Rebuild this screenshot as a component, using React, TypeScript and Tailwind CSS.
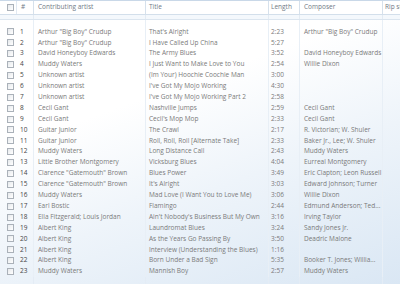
import React from "react";

type Track = [string, string, string, string];

const tracks: Track[] = [
  ['Arthur "Big Boy" Crudup', "That's Alright", "2:23", 'Arthur "Big Boy" Crudup'],
  ['Arthur "Big Boy" Crudup', "I Have Called Up China", "5:27", ""],
  ["David Honeyboy Edwards", "The Army Blues", "3:52", "David Honeyboy Edwards"],
  ["Muddy Waters", "I Just Want to Make Love to You", "2:54", "Willie Dixon"],
  ["Unknown artist", "(Im Your) Hoochie Coochie Man", "3:00", ""],
  ["Unknown artist", "I've Got My Mojo Working", "4:30", ""],
  ["Unknown artist", "I've Got My Mojo Working Part 2", "2:58", ""],
  ["Cecil Gant", "Nashville Jumps", "2:59", "Cecil Gant"],
  ["Cecil Gant", "Cecil's Mop Mop", "2:33", "Cecil Gant"],
  ["Guitar Junior", "The Crawl", "2:17", "R. Victorian; W. Shuler"],
  ["Guitar Junior", "Roll, Roll, Roll [Alternate Take]", "2:33", "Baker Jr., Lee; W. Shuler"],
  ["Muddy Waters", "Long Distance Call", "2:43", "Muddy Waters"],
  ["Little Brother Montgomery", "Vicksburg Blues", "4:04", "Eurreal Montgomery"],
  ['Clarence "Gatemouth" Brown', "Blues Power", "3:49", "Eric Clapton; Leon Russell"],
  ['Clarence "Gatemouth" Brown', "It's Alright", "3:03", "Edward Johnson; Turner"],
  ["Muddy Waters", "Mad Love (I Want You to Love Me)", "3:06", "Willie Dixon"],
  ["Earl Bostic", "Flamingo", "2:44", "Edmund Anderson; Ted..."],
  ["Ella Fitzgerald;  Louis Jordan", "Ain't Nobody's Business But My Own", "3:16", "Irving Taylor"],
  ["Albert King", "Laundromat Blues", "3:24", "Sandy Jones Jr."],
  ["Albert King", "As the Years Go Passing By", "3:50", "Deadric Malone"],
  ["Albert King", "Interview (Understanding the Blues)", "1:16", ""],
  ["Albert King", "Born Under a Bad Sign", "5:35", "Booker T. Jones; Willia..."],
  ["Muddy Waters", "Mannish Boy", "2:57", "Muddy Waters"],
];

const cols = "grid grid-cols-[16px_17px_112px_123px_31px_83px_18px]";

function Box() {
  return (
    <span className="block h-[7px] w-[7px] border border-[#aab1b9] bg-[linear-gradient(135deg,#e6e9ec,#ffffff)]" />
  );
}

export default function App() {
  return (
    <div
      className="relative flex h-[284px] w-[400px] flex-col overflow-hidden bg-[linear-gradient(160deg,#ffffff_35%,#eef4fa_62%,#dae7f4_100%)] text-[6.5px] leading-none text-[#7a7a7a]"
      style={{ fontFamily: '"Open Sans", "Noto Sans", sans-serif' }}
    >
      {/* header */}
      <div className={`${cols} h-[15px] border-t border-b border-t-[#c9d8e8] border-b-[#d3dfeb] bg-white/70 text-[#707a86]`}>
        <div className="flex items-center justify-end pr-[2px]">
          <Box />
        </div>
        <div className="flex items-center border-l border-[#e1e9f2] pl-[4px]">#</div>
        <div className="flex items-center border-l border-[#d6e1ec] pl-[4px]">Contributing artist</div>
        <div className="flex items-center border-l border-[#d6e1ec] pl-[3px]">Title</div>
        <div className="flex items-center border-l border-[#d6e1ec] pl-[2px]">Length</div>
        <div className="flex items-center border-l border-[#d6e1ec] pl-[4px]">Composer</div>
        <div className="flex items-center overflow-hidden border-l border-[#d6e1ec] pl-[2px] whitespace-nowrap">Rip status</div>
      </div>

      {/* band under header */}
      <div className={`${cols} h-[5px] border-b border-[#dbe5ef] bg-[#f4f8fc]`}>
        <div />
        <div />
        <div className="border-l border-[#e3ebf3]" />
        <div className="border-l border-[#e3ebf3]" />
        <div className="border-l border-[#e3ebf3]" />
        <div className="border-l border-[#e3ebf3]" />
        <div className="border-l border-[#e3ebf3]" />
      </div>

      <div className={`${cols} h-[6.5px]`}>
        <div />
        <div />
        <div className="border-l border-[#e8eff6]" />
        <div className="border-l border-[#e8eff6]" />
        <div className="border-l border-[#e8eff6]" />
        <div className="border-l border-[#e8eff6]" />
        <div className="border-l border-[#e8eff6]" />
      </div>

      {tracks.map(([artist, title, length, composer], i) => (
        <div key={i} className={`${cols} h-[10.9px] whitespace-nowrap`}>
          <div className="flex items-center justify-end pr-[2px]">
            <Box />
          </div>
          <div className="flex items-center pl-[4px] text-[#444444]">{i + 1}</div>
          <div className="flex items-center overflow-hidden border-l border-[#e8eff6] pl-[4px]">{artist}</div>
          <div className="flex items-center overflow-hidden border-l border-[#e8eff6] pl-[3px]">{title}</div>
          <div className="flex items-center border-l border-[#e8eff6] pl-[2px]">{length}</div>
          <div className="flex items-center overflow-hidden border-l border-[#e8eff6] pl-[4px]">{composer}</div>
          <div className="border-l border-[#e8eff6]" />
        </div>
      ))}

      <div className={`${cols} flex-1`}>
        <div />
        <div />
        <div className="border-l border-[#e4ecf5]" />
        <div className="border-l border-[#e4ecf5]" />
        <div className="border-l border-[#e4ecf5]" />
        <div className="border-l border-[#e4ecf5]" />
        <div className="border-l border-[#e4ecf5]" />
      </div>
    </div>
  );
}
